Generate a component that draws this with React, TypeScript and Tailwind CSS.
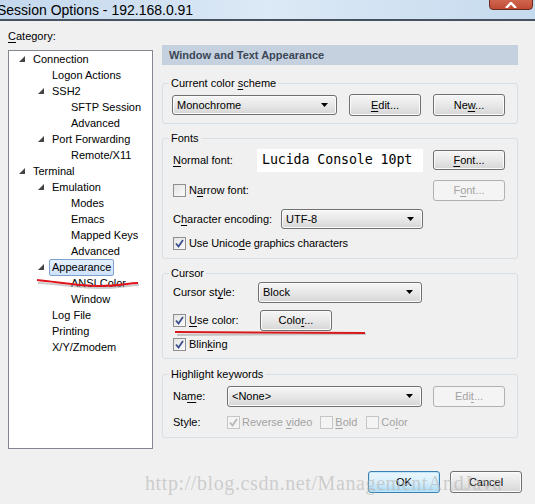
import React from "react";

type Node = { level: 0 | 1 | 2; label: string; open?: boolean; selected?: boolean };

const TREE: Node[] = [
  { level: 0, label: "Connection", open: true },
  { level: 1, label: "Logon Actions" },
  { level: 1, label: "SSH2", open: true },
  { level: 2, label: "SFTP Session" },
  { level: 2, label: "Advanced" },
  { level: 1, label: "Port Forwarding", open: true },
  { level: 2, label: "Remote/X11" },
  { level: 0, label: "Terminal", open: true },
  { level: 1, label: "Emulation", open: true },
  { level: 2, label: "Modes" },
  { level: 2, label: "Emacs" },
  { level: 2, label: "Mapped Keys" },
  { level: 2, label: "Advanced" },
  { level: 1, label: "Appearance", open: true, selected: true },
  { level: 2, label: "ANSI Color" },
  { level: 2, label: "Window" },
  { level: 1, label: "Log File" },
  { level: 1, label: "Printing" },
  { level: 1, label: "X/Y/Zmodem" },
];

const INDENT = ["pl-[10px]", "pl-[29px]", "pl-[48px]"];

// mnemonic letter
function M({ children }: { children: React.ReactNode }) {
  return <span className="underline underline-offset-[2px] decoration-[1px]">{children}</span>;
}

function Expander() {
  return (
    <svg width="6" height="6" viewBox="0 0 6 6" className="block">
      <polygon points="6,0 6,6 0,6" fill="#454545" />
    </svg>
  );
}

function Button({
  children,
  className = "",
  disabled,
  primary,
}: {
  children: React.ReactNode;
  className?: string;
  disabled?: boolean;
  primary?: boolean;
}) {
  const look = disabled
    ? "border-[#adb2b5] bg-[#f4f4f4] text-[#a3a3a3]"
    : primary
      ? "border-[#3c7fb1] bg-gradient-to-b from-[#eaf6fd] via-[#d9f0fc] to-[#a7d9f5] shadow-[inset_0_0_0_1px_#bfe6fb]"
      : "border-[#707070] bg-gradient-to-b from-[#f6f6f6] via-[#e8e8e8] to-[#d6d6d6] shadow-[inset_0_0_0_1px_#fbfbfb]";
  return (
    <div className={`flex items-center justify-center rounded-[3px] border ${look} ${className}`}>
      <span>{children}</span>
    </div>
  );
}

function Combo({ value, className = "" }: { value: string; className?: string }) {
  return (
    <div
      className={`flex items-center rounded-[3px] border border-[#707070] bg-gradient-to-b from-[#f6f6f6] via-[#e8e8e8] to-[#d6d6d6] shadow-[inset_0_0_0_1px_#fbfbfb] pl-[4px] pr-[8px] ${className}`}
    >
      <span className="flex-1">{value}</span>
      <svg width="7" height="4" viewBox="0 0 7 4">
        <polygon points="0,0 7,0 3.5,4" fill="#000" />
      </svg>
    </div>
  );
}

function Check({ checked, disabled }: { checked?: boolean; disabled?: boolean }) {
  return (
    <div
      className={`w-[13px] h-[13px] shrink-0 border flex items-center justify-center ${
        disabled
          ? "border-[#c6c6c6] bg-[#f4f4f4]"
          : "border-[#8e8f8f] bg-gradient-to-br from-[#e4e4e4] to-[#fbfbfb]"
      }`}
    >
      {checked && (
        <svg width="9" height="9" viewBox="0 0 9 9">
          <path
            d="M1 4.5 L3.5 7.5 L8 1"
            fill="none"
            stroke={disabled ? "#b8b8b8" : "#3b4f8c"}
            strokeWidth="1.8"
          />
        </svg>
      )}
    </div>
  );
}

function Group({ title, children }: { title: React.ReactNode; children: React.ReactNode }) {
  return (
    <fieldset className="border border-[#d5dfe5] rounded-[3px] pl-[9px] pr-[12px]">
      <legend className="ml-[-3px] px-[2px] leading-[14px]">{title}</legend>
      {children}
    </fieldset>
  );
}

export default function App() {
  return (
    <div className="relative w-[535px] h-[504px] overflow-hidden bg-[#f0f0f0] text-[11px] leading-[14px] text-black font-['Liberation_Sans',Arial,sans-serif]">
      {/* Title bar */}
      <div className="relative h-[21px] bg-gradient-to-r from-[#c3d7ed] via-[#dce9f6] to-[#c6daee] border-b-2 border-[#46525f]">
        <div className="ml-[-3px] pt-[2px] text-[14px] leading-[17px] text-black whitespace-nowrap">Session Options - 192.168.0.91</div>
        <div className="absolute top-[-11px] left-[489px] w-[44px] h-[21px] rounded-[4px] border border-[#6b2a22] bg-gradient-to-b from-[#e8a493] via-[#d0674f] to-[#c24a33] flex items-end justify-center pb-[1px]">
          <svg width="12" height="6" viewBox="0 0 12 6">
            <path d="M1 6 L6 1 L11 6" fill="none" stroke="#fff" strokeWidth="2.4" />
          </svg>
        </div>
      </div>

      <div className="flex">
        {/* Left: category tree */}
        <div className="ml-[8px] w-[145px]">
          <div className="mt-[8px] h-[14px]">
            <M>C</M>ategory:
          </div>
          <div className="mt-[7px] h-[399px] border border-[#828790] bg-white">
            {TREE.map((n, i) => (
              <div key={i} className={`flex items-center h-[16px] ${INDENT[n.level]}`}>
                <div className="w-[14px] flex items-center">{n.open && <Expander />}</div>
                {n.selected ? (
                  <span className="ml-[-3px] px-[2px] leading-[15px] rounded-[2px] border border-[#7da2ce] bg-gradient-to-b from-[#e5f0fd] to-[#cfe2fb]">
                    {n.label}
                  </span>
                ) : (
                  <span>{n.label}</span>
                )}
              </div>
            ))}
          </div>
        </div>

        {/* Right: settings */}
        <div className="ml-[9px] w-[356px]">
          <div className="mt-[24px] h-[20px] bg-[#c5d1de] pl-[7px] flex items-center font-bold text-[#3b4656]">
            Window and Text Appearance
          </div>

          <div className="mt-[11px]">
            <Group
              title={
                <>
                  Current color <M>s</M>cheme
                </>
              }
            >
              <div className="mt-[4px] mb-[7px] h-[22px] flex items-center">
                <Combo value="Monochrome" className="w-[165px] h-[20px]" />
                <Button className="ml-[12px] w-[72px] h-[22px]">
                  <M>E</M>dit...
                </Button>
                <Button className="ml-[12px] w-[72px] h-[22px]">
                  Ne<M>w</M>...
                </Button>
              </div>
            </Group>
          </div>

          <div className="mt-[7px]">
            <Group title="Fonts">
              <div className="mt-[3px] h-[24px] flex items-center">
                <span className="w-[85px] pl-[1px]">
                  <M>N</M>ormal font:
                </span>
                <div className="w-[166px] h-[23px] bg-white flex items-center pl-[5px] text-[13.3px] font-['DejaVu_Sans_Mono',monospace] tracking-[-0.1px]">
                  Lucida Console 10pt
                </div>
                <Button className="ml-auto w-[72px] h-[20px]">
                  <M>F</M>ont...
                </Button>
              </div>
              <div className="mt-[7px] h-[22px] flex items-center">
                <span className="pl-[1px]">
                  <Check />
                </span>
                <span className="ml-[3px]">
                  N<M>a</M>rrow font:
                </span>
                <Button disabled className="ml-auto w-[72px] h-[21px]">
                  F<M>o</M>nt...
                </Button>
              </div>
              <div className="mt-[7px] h-[22px] flex items-center">
                <span className="w-[109px] pl-[1px]">
                  C<M>h</M>aracter encoding:
                </span>
                <Combo value="UTF-8" className="w-[142px] h-[20px]" />
              </div>
              <div className="mt-[4px] mb-[6px] h-[18px] flex items-center">
                <span className="pl-[1px]">
                  <Check checked />
                </span>
                <span className="ml-[3px] tracking-[-0.1px]">
                  Use Unico<M>d</M>e graphics characters
                </span>
              </div>
            </Group>
          </div>

          <div className="mt-[7px]">
            <Group title="Cursor">
              <div className="mt-[1px] h-[22px] flex items-center">
                <span className="w-[86px] pl-[1px]">
                  Cursor st<M>y</M>le:
                </span>
                <Combo value="Block" className="w-[164px] h-[21px]" />
              </div>
              <div className="mt-[6px] h-[22px] flex items-center">
                <span className="pl-[1px]">
                  <Check checked />
                </span>
                <span className="ml-[3px] w-[71px]">
                  <M>U</M>se color:
                </span>
                <Button className="w-[72px] h-[21px]">
                  Colo<M>r</M>...
                </Button>
              </div>
              <div className="mt-[4px] mb-[5px] h-[18px] flex items-center">
                <span className="pl-[1px]">
                  <Check checked />
                </span>
                <span className="ml-[3px]">
                  Blin<M>k</M>ing
                </span>
              </div>
            </Group>
          </div>

          <div className="mt-[8px]">
            <Group title="Highlight keywords">
              <div className="mt-[4px] h-[22px] flex items-center">
                <span className="w-[55px] pl-[1px]">
                  Na<M>m</M>e:
                </span>
                <Combo value="<None>" className="w-[195px] h-[21px]" />
                <Button disabled className="ml-auto w-[72px] h-[21px]">
                  Edi<M>t</M>...
                </Button>
              </div>
              <div className="mt-[6px] mb-[6px] h-[18px] flex items-center">
                <span className="w-[55px] pl-[1px]">Style:</span>
                <Check checked disabled />
                <span className="ml-[2px] text-[#a3a3a3]">
                  Reverse <M>v</M>ideo
                </span>
                <span className="ml-[8px]">
                  <Check disabled />
                </span>
                <span className="ml-[2px] text-[#a3a3a3]">
                  <M>B</M>old
                </span>
                <span className="ml-[9px]">
                  <Check disabled />
                </span>
                <span className="ml-[2px] text-[#a3a3a3]">
                  Co<M>l</M>or
                </span>
              </div>
            </Group>
          </div>
        </div>
      </div>

      {/* Dialog buttons */}
      <div className="mt-[22px] flex justify-end pr-[13px] gap-[10px]">
        <Button primary className="w-[72px] h-[22px]">
          OK
        </Button>
        <Button className="w-[72px] h-[22px]">Cancel</Button>
      </div>

      {/* blog watermark */}
      <div className="absolute left-[145px] top-[471px] text-[20px] leading-[24px] tracking-[0.6px] text-[#b4b4b4]/60 font-['Liberation_Serif',serif] pointer-events-none whitespace-nowrap">
        http://blog.csdn.net/ManagementAndJava
      </div>

      {/* red pen marks */}
      <svg className="absolute left-0 top-0 pointer-events-none" width="535" height="504" viewBox="0 0 535 504">
        <path d="M38 283 C 60 284, 80 288, 100 288 S 128 285, 139 285" fill="none" stroke="#9a9a9a" strokeOpacity="0.5" strokeWidth="2" />
        <path d="M37 280 C 58 282, 80 286, 100 286 S 127 283, 138 283" fill="none" stroke="#e0141c" strokeWidth="2" />
        <path d="M177 335 L 366 334" fill="none" stroke="#9a9a9a" strokeOpacity="0.5" strokeWidth="2" />
        <path d="M175 332 L 365 333" fill="none" stroke="#d81a1f" strokeWidth="2" />
      </svg>
    </div>
  );
}
